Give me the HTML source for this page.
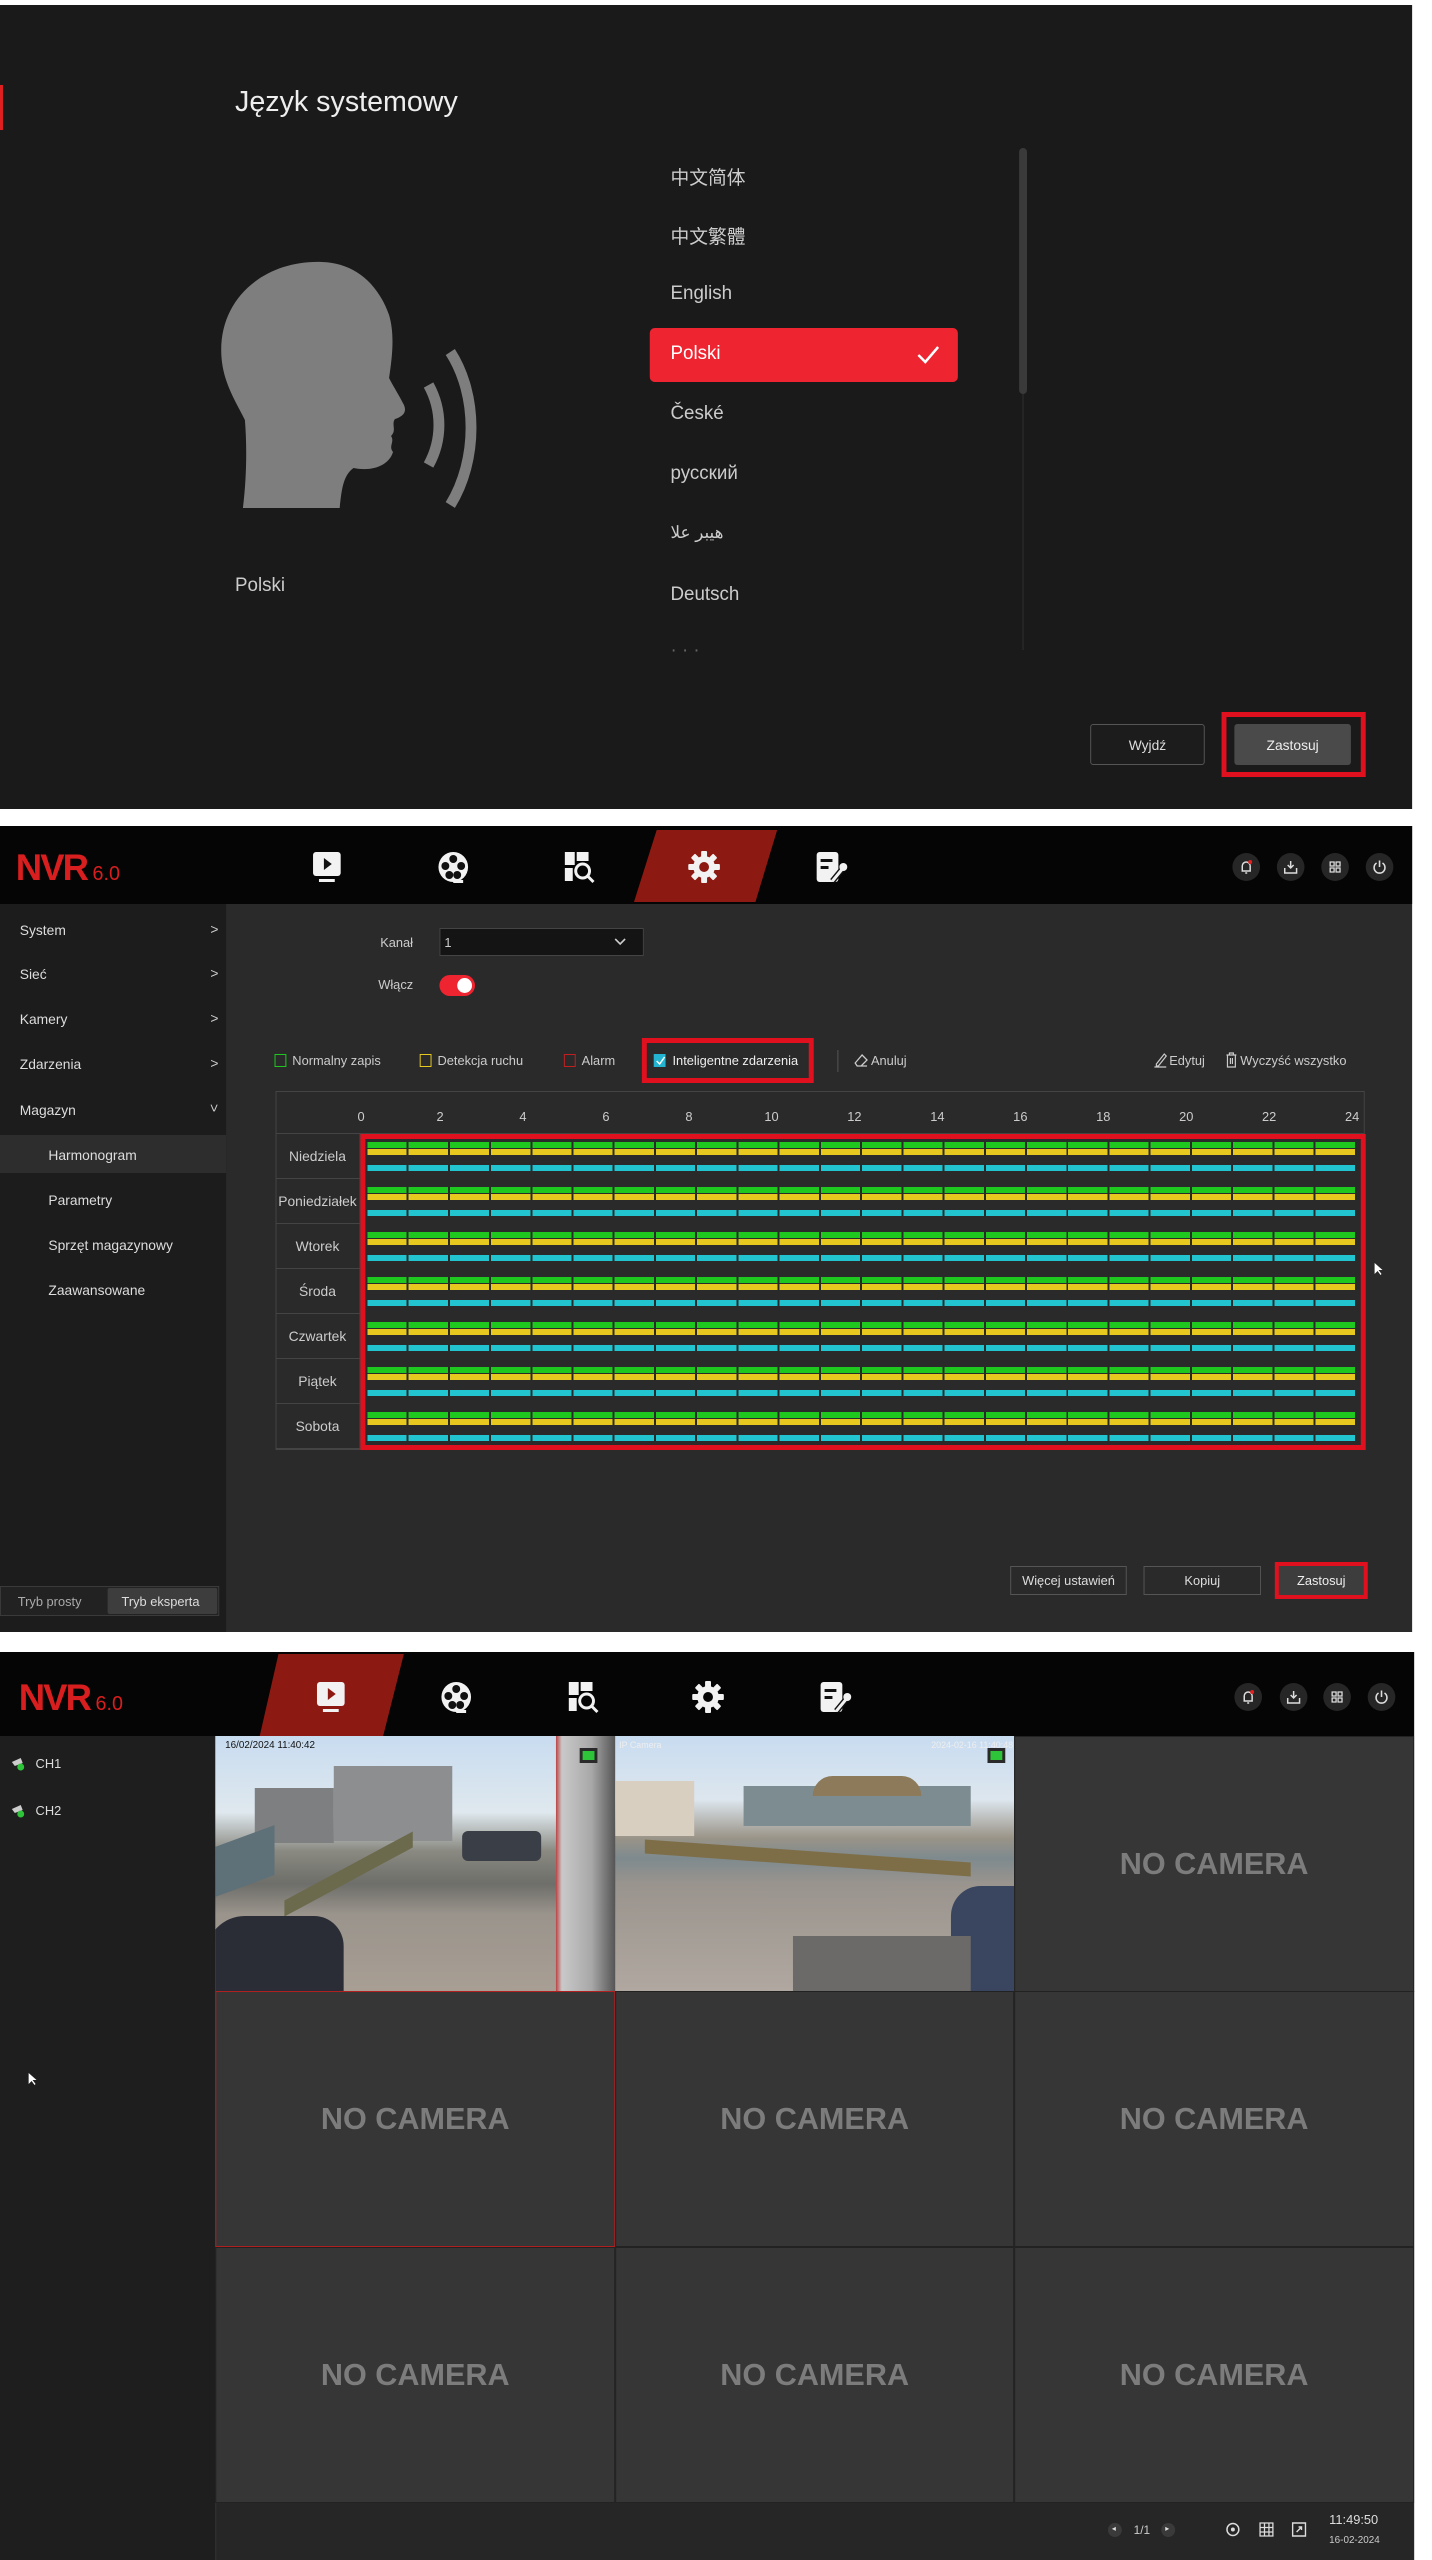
<!DOCTYPE html>
<html><head><meta charset="utf-8">
<style>
*{margin:0;padding:0;box-sizing:border-box}
body{width:1432px;height:2560px;background:#fff;position:relative;overflow:hidden;font-family:"Liberation Sans","Noto Sans CJK SC",sans-serif;color:#ddd}
#w{position:absolute;left:0;top:0;width:1432px;height:2560px;transform:scaleX(0.9875);transform-origin:0 0}
.a{position:absolute}
.t{position:absolute;white-space:nowrap}
.hdr{background:#050505}
.bar{position:absolute;left:372px;width:1002px;height:6px}
.g{background:repeating-linear-gradient(90deg,#1ec81e 0 39.75px,#2a2a2a 39.75px 41.75px)}
.y{background:repeating-linear-gradient(90deg,#e6c81e 0 39.75px,#2a2a2a 39.75px 41.75px)}
.c{background:repeating-linear-gradient(90deg,#22c4d0 0 39.75px,#2a2a2a 39.75px 41.75px)}
.day{position:absolute;left:279px;width:86px;height:45px;border-bottom:1px solid #444;border-right:1px solid #444;font-size:14px;color:#ccc;display:flex;align-items:center;justify-content:center}
.nc{position:absolute;background:#363636;border:1px solid #222;display:flex;align-items:center;justify-content:center;font-weight:bold;font-size:31px;color:#7c7c7c}
.ric{position:absolute;width:28px;height:28px;border-radius:14px;background:#262626}
.side{font-size:14px;color:#ddd}
.chev{position:absolute;left:213px;font-size:14px;color:#ccc}
</style></head><body><div id="w">

<!-- PANEL 1 -->
<div class="a" style="left:0;top:5px;width:1430px;height:804px;background:#1a1a1a"></div>
<div class="a" style="left:0;top:85px;width:3px;height:45px;background:#e02020"></div>
<div class="t" style="left:238px;top:86px;font-size:29px;color:#eee">Język systemowy</div>
<div class="t" style="left:679px;top:163px;font-size:19px;color:#ccc">中文简体</div>
<div class="t" style="left:679px;top:222px;font-size:19px;color:#ccc">中文繁體</div>
<div class="t" style="left:679px;top:283px;font-size:19px;color:#ccc">English</div>
<div class="a" style="left:658px;top:328px;width:312px;height:54px;background:#ee2430;border-radius:5px"></div>
<div class="t" style="left:679px;top:343px;font-size:19px;color:#fff">Polski</div>
<svg class="a" style="left:928px;top:344px" width="24" height="22" viewBox="0 0 24 22"><path d="M2 11 L9 18 L22 3" stroke="#fff" stroke-width="2.5" fill="none"/></svg>
<div class="t" style="left:679px;top:403px;font-size:19px;color:#ccc">České</div>
<div class="t" style="left:679px;top:463px;font-size:19px;color:#ccc">русский</div>
<div class="t" style="left:679px;top:523px;font-size:17px;color:#ccc">هيبر علا</div>
<div class="t" style="left:679px;top:584px;font-size:19px;color:#ccc">Deutsch</div>
<div class="t" style="left:679px;top:640px;font-size:19px;color:#666">· · ·</div>
<div class="a" style="left:1035px;top:148px;width:2px;height:502px;background:#252525"></div>
<div class="a" style="left:1032px;top:148px;width:8px;height:246px;background:#3a3a3a;border-radius:4px"></div>
<svg class="a" style="left:216px;top:260px" width="290" height="250" viewBox="0 0 290 250">
<path d="M110 2 C55 0 8 35 8 90 C8 120 22 140 32 160 C34 185 34 215 30 248 L128 248 C130 228 132 215 142 208 C162 212 178 205 182 192 C177 186 184 182 180 176 C186 170 180 164 184 159 C190 157 198 153 192 143 C188 135 182 126 178 118 C181 98 184 75 178 55 C166 22 142 3 110 2 Z" fill="#7e7e7e"/>
<path d="M218 125 C232 150 232 180 218 205" stroke="#7e7e7e" stroke-width="11" fill="none"/>
<path d="M240 92 C268 135 268 200 240 245" stroke="#7e7e7e" stroke-width="11" fill="none"/>
</svg>
<div class="t" style="left:238px;top:575px;font-size:19px;color:#ccc">Polski</div>
<div class="a" style="left:1104px;top:724px;width:116px;height:41px;border:1px solid #555;border-radius:3px;background:#1c1c1c;font-size:14px;color:#ddd;display:flex;align-items:center;justify-content:center">Wyjdź</div>
<div class="a" style="left:1237px;top:712px;width:146px;height:65px;border:5px solid #e0101e"></div>
<div class="a" style="left:1250px;top:724px;width:118px;height:41px;border-radius:3px;background:#4a4a4a;font-size:14px;color:#eee;display:flex;align-items:center;justify-content:center">Zastosuj</div>

<!-- PANEL 2 -->
<div class="a" style="left:0;top:826px;width:1430px;height:806px;background:#2a2a2a"></div>
<div class="a hdr" style="left:0;top:826px;width:1430px;height:78px"></div>
<div class="a" style="left:0;top:904px;width:229px;height:728px;background:#1c1c1c"></div>
<div class="t" style="left:16px;top:847px;font-size:37px;font-weight:bold;color:#d81e1e;letter-spacing:-2px">NVR<span style="font-size:20px;font-weight:normal;letter-spacing:0"> 6.0</span></div>
<svg class="a" style="left:638px;top:830px" width="150" height="72"><polygon points="27,0 149,0 127,72 4,72" fill="#8c1a12"/></svg>

<svg class="a" style="left:313px;top:849px" width="36" height="36" viewBox="0 0 36 36"><rect x="4" y="3" width="28" height="24" rx="3" fill="#f2f2f2"/><polygon points="15,9 23,15 15,21" fill="#111"/><rect x="10" y="30" width="16" height="3" fill="#f2f2f2"/></svg>
<svg class="a" style="left:441px;top:849px" width="36" height="36" viewBox="0 0 36 36"><circle cx="18" cy="18" r="15" fill="#f2f2f2"/><circle cx="18" cy="10" r="4" fill="#111"/><circle cx="10" cy="17" r="4" fill="#111"/><circle cx="26" cy="17" r="4" fill="#111"/><circle cx="14" cy="26" r="4" fill="#111"/><circle cx="22" cy="26" r="4" fill="#111"/><rect x="18" y="31" width="10" height="3" fill="#f2f2f2"/></svg>
<svg class="a" style="left:568px;top:849px" width="36" height="36" viewBox="0 0 36 36"><rect x="4" y="3" width="10" height="13" fill="#f2f2f2"/><rect x="16" y="3" width="12" height="9" fill="#f2f2f2"/><rect x="4" y="19" width="8" height="13" fill="#f2f2f2"/><circle cx="22" cy="22" r="7" stroke="#f2f2f2" stroke-width="3" fill="none"/><path d="M27 27 L33 33" stroke="#f2f2f2" stroke-width="3"/></svg>
<svg class="a" style="left:695px;top:849px" width="36" height="36" viewBox="0 0 36 36"><g fill="#f2f2f2"><circle cx="18" cy="18" r="11"/><rect x="15" y="2" width="6" height="32" rx="1"/><rect x="15" y="2" width="6" height="32" rx="1" transform="rotate(45 18 18)"/><rect x="15" y="2" width="6" height="32" rx="1" transform="rotate(90 18 18)"/><rect x="15" y="2" width="6" height="32" rx="1" transform="rotate(135 18 18)"/></g><circle cx="18" cy="18" r="5" fill="#8c1a12"/></svg>
<svg class="a" style="left:823px;top:849px" width="36" height="36" viewBox="0 0 36 36"><rect x="4" y="3" width="22" height="30" rx="3" fill="#f2f2f2"/><rect x="8" y="10" width="12" height="3" fill="#111"/><rect x="8" y="17" width="8" height="3" fill="#111"/><path d="M20 32 L30 20" stroke="#111" stroke-width="6"/><path d="M20 32 L30 20" stroke="#f2f2f2" stroke-width="3"/><circle cx="31" cy="18" r="4" fill="#f2f2f2"/></svg>

<div class="ric" style="left:1248px;top:853px"></div><div class="ric" style="left:1293px;top:853px"></div><div class="ric" style="left:1338px;top:853px"></div><div class="ric" style="left:1383px;top:853px"></div>
<svg class="a" style="left:1254px;top:859px" width="16" height="16" viewBox="0 0 16 16"><path d="M4 12 V7 a4 4 0 0 1 8 0 V12 Z M7 14 h2" stroke="#ddd" stroke-width="1.5" fill="none"/><circle cx="12" cy="3" r="2" fill="#e02020"/></svg>
<svg class="a" style="left:1299px;top:859px" width="16" height="16" viewBox="0 0 16 16"><path d="M8 2 V9 M5 6 L8 9 L11 6 M2 9 V14 H14 V9" stroke="#ddd" stroke-width="1.5" fill="none"/></svg>
<svg class="a" style="left:1344px;top:859px" width="16" height="16" viewBox="0 0 16 16"><path d="M3 3h4v4H3z M9 3h4v4H9z M3 9h4v4H3z M9 9h4v4H9z" stroke="#ddd" stroke-width="1.3" fill="none"/></svg>
<svg class="a" style="left:1389px;top:859px" width="16" height="16" viewBox="0 0 16 16"><path d="M5 4 a5.5 5.5 0 1 0 6 0 M8 1.5 V8" stroke="#ddd" stroke-width="1.6" fill="none"/></svg>

<div class="t side" style="left:20px;top:922px">System</div><div class="chev" style="top:921px">&gt;</div>
<div class="t side" style="left:20px;top:966px">Sieć</div><div class="chev" style="top:965px">&gt;</div>
<div class="t side" style="left:20px;top:1011px">Kamery</div><div class="chev" style="top:1010px">&gt;</div>
<div class="t side" style="left:20px;top:1056px">Zdarzenia</div><div class="chev" style="top:1055px">&gt;</div>
<div class="t side" style="left:20px;top:1102px">Magazyn</div><div class="chev" style="top:1100px;transform:rotate(90deg)">&gt;</div>
<div class="a" style="left:0;top:1135px;width:229px;height:38px;background:#2d2d2d"></div>
<div class="t side" style="left:49px;top:1147px">Harmonogram</div>
<div class="t side" style="left:49px;top:1192px">Parametry</div>
<div class="t side" style="left:49px;top:1237px">Sprzęt magazynowy</div>
<div class="t side" style="left:49px;top:1282px">Zaawansowane</div>
<div class="a" style="left:0;top:1586px;width:222px;height:30px;border:1px solid #3a3a3a;background:#222"></div>
<div class="t" style="left:18px;top:1594px;font-size:13px;color:#aaa">Tryb prosty</div>
<div class="a" style="left:109px;top:1588px;width:111px;height:26px;background:#3d3d3d;border-radius:2px"></div>
<div class="t" style="left:123px;top:1594px;font-size:13px;color:#ddd">Tryb eksperta</div>

<div class="t" style="left:385px;top:935px;font-size:13px;color:#ccc">Kanał</div>
<div class="a" style="left:445px;top:928px;width:207px;height:28px;background:#141414;border:1px solid #444"></div>
<div class="t" style="left:450px;top:935px;font-size:13px;color:#ccc">1</div>
<svg class="a" style="left:622px;top:937px" width="12" height="10"><path d="M1 2 L6 7 L11 2" stroke="#ccc" stroke-width="1.6" fill="none"/></svg>
<div class="t" style="left:383px;top:977px;font-size:13px;color:#ccc">Włącz</div>
<div class="a" style="left:445px;top:975px;width:36px;height:21px;border-radius:11px;background:#ee2430"></div>
<div class="a" style="left:463px;top:978px;width:15px;height:15px;border-radius:8px;background:#fff"></div>

<div class="a" style="left:278px;top:1054px;width:12px;height:13px;border:1px solid #1ec81e"></div>
<div class="t" style="left:296px;top:1053px;font-size:13px;color:#ccc">Normalny zapis</div>
<div class="a" style="left:425px;top:1054px;width:12px;height:13px;border:1px solid #e6c81e"></div>
<div class="t" style="left:443px;top:1053px;font-size:13px;color:#ccc">Detekcja ruchu</div>
<div class="a" style="left:571px;top:1054px;width:12px;height:13px;border:1px solid #c02020"></div>
<div class="t" style="left:589px;top:1053px;font-size:13px;color:#ccc">Alarm</div>
<div class="a" style="left:650px;top:1038px;width:174px;height:45px;border:5px solid #e0101e"></div>
<div class="a" style="left:662px;top:1054px;width:12px;height:13px;background:#22b4d0"></div>
<svg class="a" style="left:663px;top:1055px" width="11" height="11"><path d="M2 6 L5 9 L10 2" stroke="#fff" stroke-width="1.5" fill="none"/></svg>
<div class="t" style="left:681px;top:1053px;font-size:13px;color:#eee">Inteligentne zdarzenia</div>
<div class="a" style="left:848px;top:1050px;width:1px;height:22px;background:#555"></div>
<svg class="a" style="left:864px;top:1053px" width="16" height="15"><path d="M2 10 L9 2 L14 7 L8 13 H4 Z M5 13 H14" stroke="#ccc" stroke-width="1.3" fill="none"/></svg>
<div class="t" style="left:882px;top:1053px;font-size:13px;color:#ccc">Anuluj</div>
<svg class="a" style="left:1168px;top:1052px" width="14" height="16"><path d="M3 12 L11 2 L13 4 L5 14 H3 Z M1 15 H13" stroke="#ccc" stroke-width="1.2" fill="none"/></svg>
<div class="t" style="left:1184px;top:1053px;font-size:13px;color:#ccc">Edytuj</div>
<svg class="a" style="left:1240px;top:1052px" width="14" height="16"><path d="M2 3 H12 M5 3 V1 H9 V3 M3 3 V15 H11 V3 M6 6 V12 M8 6 V12" stroke="#ccc" stroke-width="1.2" fill="none"/></svg>
<div class="t" style="left:1256px;top:1053px;font-size:13px;color:#ccc">Wyczyść wszystko</div>

<div class="a" style="left:279px;top:1091px;width:1103px;height:359px;border:1px solid #444"></div>
<div class="a" style="left:279px;top:1133px;width:1103px;height:1px;background:#444"></div>
<div class="t" style="left:362px;top:1109px;font-size:13px;color:#ccc">0</div>
<div class="t" style="left:442px;top:1109px;font-size:13px;color:#ccc">2</div>
<div class="t" style="left:526px;top:1109px;font-size:13px;color:#ccc">4</div>
<div class="t" style="left:610px;top:1109px;font-size:13px;color:#ccc">6</div>
<div class="t" style="left:694px;top:1109px;font-size:13px;color:#ccc">8</div>
<div class="t" style="left:774px;top:1109px;font-size:13px;color:#ccc">10</div>
<div class="t" style="left:858px;top:1109px;font-size:13px;color:#ccc">12</div>
<div class="t" style="left:942px;top:1109px;font-size:13px;color:#ccc">14</div>
<div class="t" style="left:1026px;top:1109px;font-size:13px;color:#ccc">16</div>
<div class="t" style="left:1110px;top:1109px;font-size:13px;color:#ccc">18</div>
<div class="t" style="left:1194px;top:1109px;font-size:13px;color:#ccc">20</div>
<div class="t" style="left:1278px;top:1109px;font-size:13px;color:#ccc">22</div>
<div class="t" style="left:1362px;top:1109px;font-size:13px;color:#ccc">24</div>

<div class="day" style="top:1134px">Niedziela</div>
<div class="day" style="top:1179px">Poniedziałek</div>
<div class="day" style="top:1224px">Wtorek</div>
<div class="day" style="top:1269px">Środa</div>
<div class="day" style="top:1314px">Czwartek</div>
<div class="day" style="top:1359px">Piątek</div>
<div class="day" style="top:1404px">Sobota</div>

<div class="bar g" style="top:1142px"></div><div class="bar y" style="top:1149px"></div><div class="bar c" style="top:1165px"></div>
<div class="bar g" style="top:1187px"></div><div class="bar y" style="top:1194px"></div><div class="bar c" style="top:1210px"></div>
<div class="bar g" style="top:1232px"></div><div class="bar y" style="top:1239px"></div><div class="bar c" style="top:1255px"></div>
<div class="bar g" style="top:1277px"></div><div class="bar y" style="top:1284px"></div><div class="bar c" style="top:1300px"></div>
<div class="bar g" style="top:1322px"></div><div class="bar y" style="top:1329px"></div><div class="bar c" style="top:1345px"></div>
<div class="bar g" style="top:1367px"></div><div class="bar y" style="top:1374px"></div><div class="bar c" style="top:1390px"></div>
<div class="bar g" style="top:1412px"></div><div class="bar y" style="top:1419px"></div><div class="bar c" style="top:1435px"></div>
<div class="a" style="left:365px;top:1134px;width:1018px;height:316px;border:5px solid #e0101e"></div>

<div class="a" style="left:1023px;top:1566px;width:118px;height:29px;border:1px solid #555;background:#2a2a2a;font-size:13px;color:#ddd;display:flex;align-items:center;justify-content:center">Więcej ustawień</div>
<div class="a" style="left:1158px;top:1566px;width:119px;height:29px;border:1px solid #555;background:#2a2a2a;font-size:13px;color:#ddd;display:flex;align-items:center;justify-content:center">Kopiuj</div>
<div class="a" style="left:1291px;top:1562px;width:94px;height:37px;border:4px solid #e0101e;background:#3d3d3d;font-size:13px;color:#eee;display:flex;align-items:center;justify-content:center">Zastosuj</div>
<svg class="a" style="left:1391px;top:1262px" width="10" height="14"><path d="M1 1 V12 L4 9 L7 13 L8 12 L5 8 H9 Z" fill="#fff"/></svg>

<!-- PANEL 3 -->
<div class="a" style="left:0;top:1652px;width:1432px;height:908px;background:#1e1e1e"></div>
<div class="a hdr" style="left:0;top:1652px;width:1432px;height:84px"></div>
<div class="t" style="left:19px;top:1677px;font-size:37px;font-weight:bold;color:#d81e1e;letter-spacing:-2px">NVR<span style="font-size:20px;font-weight:normal;letter-spacing:0"> 6.0</span></div>
<svg class="a" style="left:262px;top:1654px" width="150" height="82"><polygon points="20,0 147,0 126,82 1,82" fill="#8c1a12"/></svg>
<svg class="a" style="left:317px;top:1679px" width="36" height="36" viewBox="0 0 36 36"><rect x="4" y="3" width="28" height="24" rx="3" fill="#f2f2f2"/><polygon points="15,9 23,15 15,21" fill="#8c1a12"/><rect x="10" y="30" width="16" height="3" fill="#f2f2f2"/></svg>
<svg class="a" style="left:444px;top:1679px" width="36" height="36" viewBox="0 0 36 36"><circle cx="18" cy="18" r="15" fill="#f2f2f2"/><circle cx="18" cy="10" r="4" fill="#111"/><circle cx="10" cy="17" r="4" fill="#111"/><circle cx="26" cy="17" r="4" fill="#111"/><circle cx="14" cy="26" r="4" fill="#111"/><circle cx="22" cy="26" r="4" fill="#111"/><rect x="18" y="31" width="10" height="3" fill="#f2f2f2"/></svg>
<svg class="a" style="left:572px;top:1679px" width="36" height="36" viewBox="0 0 36 36"><rect x="4" y="3" width="10" height="13" fill="#f2f2f2"/><rect x="16" y="3" width="12" height="9" fill="#f2f2f2"/><rect x="4" y="19" width="8" height="13" fill="#f2f2f2"/><circle cx="22" cy="22" r="7" stroke="#f2f2f2" stroke-width="3" fill="none"/><path d="M27 27 L33 33" stroke="#f2f2f2" stroke-width="3"/></svg>
<svg class="a" style="left:699px;top:1679px" width="36" height="36" viewBox="0 0 36 36"><g fill="#f2f2f2"><circle cx="18" cy="18" r="11"/><rect x="15" y="2" width="6" height="32" rx="1"/><rect x="15" y="2" width="6" height="32" rx="1" transform="rotate(45 18 18)"/><rect x="15" y="2" width="6" height="32" rx="1" transform="rotate(90 18 18)"/><rect x="15" y="2" width="6" height="32" rx="1" transform="rotate(135 18 18)"/></g><circle cx="18" cy="18" r="5" fill="#050505"/></svg>
<svg class="a" style="left:827px;top:1679px" width="36" height="36" viewBox="0 0 36 36"><rect x="4" y="3" width="22" height="30" rx="3" fill="#f2f2f2"/><rect x="8" y="10" width="12" height="3" fill="#111"/><rect x="8" y="17" width="8" height="3" fill="#111"/><path d="M20 32 L30 20" stroke="#111" stroke-width="6"/><path d="M20 32 L30 20" stroke="#f2f2f2" stroke-width="3"/><circle cx="31" cy="18" r="4" fill="#f2f2f2"/></svg>

<div class="ric" style="left:1250px;top:1683px"></div><div class="ric" style="left:1296px;top:1683px"></div><div class="ric" style="left:1340px;top:1683px"></div><div class="ric" style="left:1385px;top:1683px"></div>
<svg class="a" style="left:1256px;top:1689px" width="16" height="16" viewBox="0 0 16 16"><path d="M4 12 V7 a4 4 0 0 1 8 0 V12 Z M7 14 h2" stroke="#ddd" stroke-width="1.5" fill="none"/><circle cx="12" cy="3" r="2" fill="#e02020"/></svg>
<svg class="a" style="left:1302px;top:1689px" width="16" height="16" viewBox="0 0 16 16"><path d="M8 2 V9 M5 6 L8 9 L11 6 M2 9 V14 H14 V9" stroke="#ddd" stroke-width="1.5" fill="none"/></svg>
<svg class="a" style="left:1346px;top:1689px" width="16" height="16" viewBox="0 0 16 16"><path d="M3 3h4v4H3z M9 3h4v4H9z M3 9h4v4H3z M9 9h4v4H9z" stroke="#ddd" stroke-width="1.3" fill="none"/></svg>
<svg class="a" style="left:1391px;top:1689px" width="16" height="16" viewBox="0 0 16 16"><path d="M5 4 a5.5 5.5 0 1 0 6 0 M8 1.5 V8" stroke="#ddd" stroke-width="1.6" fill="none"/></svg>

<svg class="a" style="left:11px;top:1757px" width="16" height="14"><path d="M1 5 L10 1 L12 6 L4 9 Z" fill="#ccc"/><circle cx="10" cy="10" r="3.5" fill="#2ec43a"/></svg>
<div class="t" style="left:36px;top:1756px;font-size:13px;color:#ddd">CH1</div>
<svg class="a" style="left:11px;top:1804px" width="16" height="14"><path d="M1 5 L10 1 L12 6 L4 9 Z" fill="#ccc"/><circle cx="10" cy="10" r="3.5" fill="#2ec43a"/></svg>
<div class="t" style="left:36px;top:1803px;font-size:13px;color:#ddd">CH2</div>
<svg class="a" style="left:28px;top:2072px" width="10" height="14"><path d="M1 1 V12 L4 9 L7 13 L8 12 L5 8 H9 Z" fill="#fff"/></svg>

<div class="a" style="left:218px;top:1736px;width:405px;height:255px;overflow:hidden;background:linear-gradient(180deg,#c8dcf0 0%,#dfe8ee 30%,#8a8a82 45%,#6e6e6a 58%,#9a948c 70%,#a89e94 100%)">
  <div class="a" style="left:120px;top:30px;width:120px;height:75px;background:#8d8e90"></div>
  <div class="a" style="left:40px;top:52px;width:80px;height:55px;background:#7e7f80"></div>
  <div class="a" style="left:0;top:100px;width:60px;height:50px;background:#5e7078;transform:skewY(-20deg)"></div>
  <div class="a" style="left:70px;top:130px;width:130px;height:16px;background:#6c6a4c;transform:skewY(-28deg)"></div>
  <div class="a" style="left:345px;top:0;width:60px;height:255px;background:linear-gradient(90deg,#b44 0,#c9c9c9 10%,#a8a8a8 60%,#555 100%)"></div>
  <div class="a" style="left:-10px;top:180px;width:140px;height:90px;background:#2a2d36;border-radius:40px 30px 0 0"></div>
  <div class="a" style="left:250px;top:95px;width:80px;height:30px;background:#3a3e46;border-radius:6px"></div>
  <div class="t" style="left:10px;top:4px;font-size:10px;color:#111">16/02/2024 11:40:42</div>
  <div class="a" style="left:369px;top:12px;width:18px;height:15px;background:#2a2a2a"></div>
  <div class="a" style="left:372px;top:15px;width:12px;height:9px;background:#2ec43a"></div>
</div>
<div class="a" style="left:623px;top:1736px;width:404px;height:255px;overflow:hidden;background:linear-gradient(180deg,#c8dcf0 0%,#dde6ee 25%,#9a9488 40%,#7e8a8e 48%,#9a948e 58%,#b0a8a0 100%)">
  <div class="a" style="left:0;top:45px;width:80px;height:55px;background:#d8cfc0"></div>
  <div class="a" style="left:130px;top:50px;width:230px;height:40px;background:#7d8c90"></div>
  <div class="a" style="left:200px;top:40px;width:110px;height:20px;background:#8c7a5a;border-radius:40px 40px 0 0"></div>
  <div class="a" style="left:30px;top:115px;width:330px;height:14px;background:#7d6e48;transform:skewY(4deg)"></div>
  <div class="a" style="left:340px;top:150px;width:70px;height:110px;background:#3a4660;border-radius:30px 0 0 0"></div>
  <div class="a" style="left:180px;top:200px;width:180px;height:55px;background:#6c6a68"></div>
  <div class="t" style="left:4px;top:4px;font-size:9px;color:#eee">IP Camera</div>
  <div class="t" style="left:320px;top:4px;font-size:9px;color:#eee">2024-02-16 11:40:48</div>
  <div class="a" style="left:377px;top:12px;width:18px;height:15px;background:#2a2a2a"></div>
  <div class="a" style="left:380px;top:15px;width:12px;height:9px;background:#2ec43a"></div>
</div>
<div class="nc" style="left:1027px;top:1736px;width:405px;height:256px">NO CAMERA</div>
<div class="nc" style="left:218px;top:1991px;width:405px;height:256px;border-color:#b02020">NO CAMERA</div>
<div class="nc" style="left:623px;top:1991px;width:404px;height:256px">NO CAMERA</div>
<div class="nc" style="left:1027px;top:1991px;width:405px;height:256px">NO CAMERA</div>
<div class="nc" style="left:218px;top:2247px;width:405px;height:256px">NO CAMERA</div>
<div class="nc" style="left:623px;top:2247px;width:404px;height:256px">NO CAMERA</div>
<div class="nc" style="left:1027px;top:2247px;width:405px;height:256px">NO CAMERA</div>
<div class="a" style="left:218px;top:2503px;width:1214px;height:57px;background:#262626;border-left:1px solid #333"></div>
<div class="a" style="left:1122px;top:2523px;width:14px;height:14px;border-radius:7px;background:#3a3a3a"></div>
<div class="t" style="left:1126px;top:2524px;font-size:8px;color:#ddd">◂</div>
<div class="t" style="left:1148px;top:2523px;font-size:12px;color:#ccc">1/1</div>
<div class="a" style="left:1176px;top:2523px;width:14px;height:14px;border-radius:7px;background:#3a3a3a"></div>
<div class="t" style="left:1180px;top:2524px;font-size:8px;color:#ddd">▸</div>
<svg class="a" style="left:1240px;top:2521px" width="17" height="17"><circle cx="8.5" cy="8.5" r="6" stroke="#ddd" stroke-width="1.5" fill="none"/><circle cx="8.5" cy="8.5" r="2" fill="#ddd"/></svg>
<svg class="a" style="left:1274px;top:2521px" width="17" height="17"><path d="M2 2h13v13H2z M6.5 2v13 M11 2v13 M2 6.5h13 M2 11h13" stroke="#ddd" stroke-width="1.3" fill="none"/></svg>
<svg class="a" style="left:1307px;top:2521px" width="17" height="17"><path d="M2 2h13v13H2z M6 11 L11 6 M8 6h3v3" stroke="#ddd" stroke-width="1.4" fill="none"/></svg>
<div class="t" style="left:1346px;top:2512px;font-size:13px;color:#ddd">11:49:50</div>
<div class="t" style="left:1346px;top:2535px;font-size:10px;color:#ccc">16-02-2024</div>
</div></body></html>
